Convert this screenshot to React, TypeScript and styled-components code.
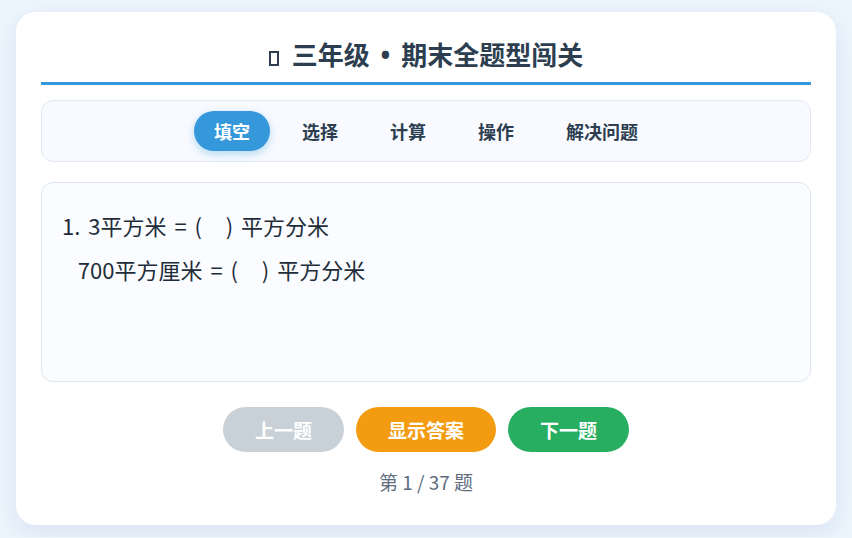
import { useState } from 'react'
import { styled, createGlobalStyle } from 'styled-components'

const questions = [
	'1. 3平方米 = (   ) 平方分米\n  700平方厘米 = (   ) 平方分米',
]

const tabs = ['填空', '选择', '计算', '操作', '解决问题']

const GlobalStyle = createGlobalStyle`
	html, body {
		margin: 0;
		padding: 0;
		background: #edf5fd;
	}
	body {
		padding: 12px 16px;
		font-family: "Noto Sans CJK SC", "Noto Sans", sans-serif;
	}
	* {
		box-sizing: border-box;
	}
`

export default function App() {
	const [active, setActive] = useState(0)
	const [index] = useState(0)

	return	<>
				<GlobalStyle/>
				<Card>
					<Title><Glyph aria-hidden/> 三年级 <Dot>•</Dot> 期末全题型闯关</Title>

					<TabBar>
						{tabs.map((t, i) =>
							<Tab key={t} active={i === active} onClick={() => setActive(i)}>{t}</Tab>
						)}
					</TabBar>

					<QuestionBox>{questions[index]}</QuestionBox>

					<Controls>
						<NavButton tone='disabled'>上一题</NavButton>
						<NavButton tone='answer'>显示答案</NavButton>
						<NavButton tone='next'>下一题</NavButton>
					</Controls>

					<Counter>第 {index + 1} / 37 题</Counter>
				</Card>
			</>
}

const Card = styled.div`
	max-width: 820px;
	margin: 0 auto;
	background: #ffffff;
	border-radius: 20px;
	padding: 25px 25px 31px;
	box-shadow: 0 8px 24px rgba(90, 130, 180, 0.14);
`

const Title = styled.h2`
	margin: 0 0 15px;
	padding-bottom: 12px;
	border-bottom: 3px solid #3498db;
	text-align: center;
	font-size: 26px;
	line-height: 33px;
	height: 48px;
	font-weight: 700;
	color: #2c3e50;
`

const Dot = styled.span`
	font-family: "Noto Sans", sans-serif;
	line-height: 1;
	margin: 0 5px;
`

// emoji that the reference could not draw: an empty box
const Glyph = styled.span`
	display: inline-block;
	width: 10px;
	height: 15px;
	border: 2px solid #2c3e50;
	vertical-align: -1px;
	margin-right: 7px;
`

const TabBar = styled.div`
	display: flex;
	justify-content: center;
	gap: 12px;
	padding: 10px;
	background: #f8faff;
	border: 1px solid #e1e8f0;
	border-radius: 12px;
	margin-bottom: 20px;
`

const Tab = styled.button<{active: boolean}>`
	border: none;
	height: 40px;
	padding: 0 20px;
	border-radius: 20px;
	font-family: inherit;
	font-size: 18px;
	font-weight: 700;
	cursor: pointer;
	color: ${p => p.active ? '#ffffff' : '#2c3e50'};
	background: ${p => p.active ? '#3498db' : 'transparent'};
	box-shadow: ${p => p.active ? '0 3px 8px rgba(52, 152, 219, 0.35)' : 'none'};
`

const QuestionBox = styled.div`
	min-height: 200px;
	padding: 20px;
	background: #fafcff;
	border: 1px solid #dde6ef;
	border-radius: 12px;
	font-size: 22px;
	line-height: 44px;
	word-spacing: 3px;
	color: #1f2d3a;
	white-space: pre-wrap;
`

const tones = {
	disabled: '#c8d1d8',
	answer: '#f39c12',
	next: '#27ae60',
}

const Controls = styled.div`
	display: flex;
	justify-content: center;
	gap: 12px;
	margin-top: 25px;
`

const NavButton = styled.button<{tone: keyof typeof tones}>`
	border: none;
	height: 45px;
	min-width: 120px;
	padding: 0 32px;
	border-radius: 23px;
	font-family: inherit;
	font-size: 19px;
	font-weight: 700;
	color: #ffffff;
	background: ${p => tones[p.tone]};
	cursor: ${p => p.tone === 'disabled' ? 'not-allowed' : 'pointer'};
`

const Counter = styled.div`
	margin-top: 18px;
	text-align: center;
	font-size: 19px;
	line-height: 24px;
	color: #5d6d7e;
`
